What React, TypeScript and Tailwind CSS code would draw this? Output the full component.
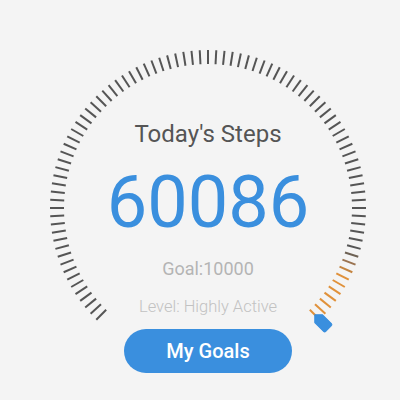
import React from "react";

const CX = 208;
const CY = 208;
const R_OUT = 158;
const R_IN = 144;
const N = 91;

function tickColor(i: number): string {
  if (i >= 84) return "#e0913a";
  if (i === 83) return "#c4843f";
  if (i === 82) return "#9a7350";
  if (i === 81) return "#6e6255";
  return "#555555";
}

function Dial() {
  const ticks = [];
  for (let i = 0; i < N; i++) {
    const a = ((225 - i * 3) * Math.PI) / 180;
    const x1 = CX + R_OUT * Math.cos(a);
    const y1 = CY - R_OUT * Math.sin(a);
    const x2 = CX + R_IN * Math.cos(a);
    const y2 = CY - R_IN * Math.sin(a);
    ticks.push(
      <line
        key={i}
        x1={x1}
        y1={y1}
        x2={x2}
        y2={y2}
        stroke={tickColor(i)}
        strokeWidth={2}
      />
    );
  }
  return (
    <svg
      className="absolute left-0 top-0"
      width={400}
      height={400}
      viewBox="0 0 400 400"
    >
      {ticks}
      <g transform={`translate(${CX} ${CY}) rotate(45)`}>
        <path
          d="M151 0 L156.5 -5.5 L169 -5.5 Q170.5 -5.5 170.5 -4 L170.5 4 Q170.5 5.5 169 5.5 L156.5 5.5 Z"
          fill="#3a8fde"
          stroke="#3a8fde"
          strokeWidth={1}
          strokeLinejoin="round"
        />
      </g>
    </svg>
  );
}

export default function App() {
  return (
    <div
      className="relative w-[400px] h-[400px] overflow-hidden bg-[#f4f4f4]"
      style={{ fontFamily: "Roboto, 'Noto Sans', sans-serif" }}
    >
      <Dial />
      <div className="relative flex flex-col items-center pl-[16px] pt-[120px]">
        <div className="h-[28px] text-[24px] leading-[28px] text-[#555555]">
          Today's Steps
        </div>
        <div className="mt-[19px] h-[72px] text-[72px] leading-[72px] text-[#3a8fde]">
          60086
        </div>
        <div className="mt-[19px] h-[22px] text-[18px] leading-[22px] text-[#b4b4b4]">
          Goal:10000
        </div>
        <div className="mt-[16px] h-[22px] text-[16.5px] leading-[22px] text-[#c2c2c2] font-light">
          Level: Highly Active
        </div>
        <button className="mt-[11px] flex h-[44px] w-[168px] items-center justify-center rounded-full bg-[#3a8fde] text-[20px] font-medium text-white">
          My Goals
        </button>
      </div>
    </div>
  );
}
